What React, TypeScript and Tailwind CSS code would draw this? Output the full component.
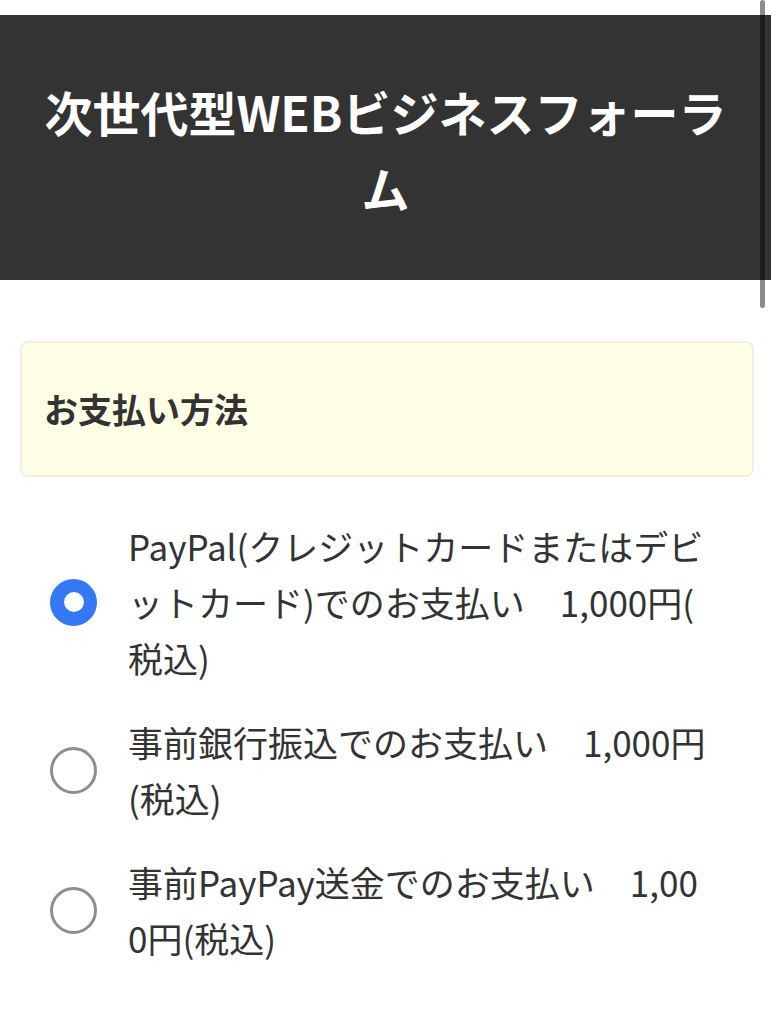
import React from "react";

const font = { fontFamily: '"Noto Sans CJK JP", "Noto Sans", sans-serif' };

function Radio({ checked }: { checked?: boolean }) {
  if (checked) {
    return (
      <div className="flex h-[47px] w-[47px] shrink-0 items-center justify-center rounded-full bg-[#3478f6]">
        <div className="h-[20px] w-[20px] rounded-full bg-white" />
      </div>
    );
  }
  return <div className="h-[47px] w-[47px] shrink-0 rounded-full border-[3px] border-[#8e8e8e] bg-white" />;
}

function Option({ lines, checked }: { lines: string[]; checked?: boolean }) {
  return (
    <label className="flex items-center gap-[31px] pl-[30px]">
      <Radio checked={checked} />
      <span className="whitespace-nowrap text-[35px] leading-[56px] text-[#333333]">
        {lines.map((l, i) => (
          <React.Fragment key={i}>
            {l}
            {i < lines.length - 1 && <br />}
          </React.Fragment>
        ))}
      </span>
    </label>
  );
}

export default function App() {
  return (
    <div className="relative min-h-[1024px] bg-white pt-[15px]" style={font}>
      <header className="bg-[#333333] px-[30px] pb-[55px] pt-[58px]">
        <h1 className="text-center text-[48px] font-bold leading-[76px] text-white">
          次世代型WEBビジネスフォーラム
        </h1>
      </header>

      <main className="pb-10 pl-[20px] pr-[17px] pt-[61px]">
        <div className="rounded-[8px] border-2 border-[#efefe4] bg-[#ffffe5] px-[22px] py-[40px]">
          <h2 className="text-[34px] font-bold leading-[52px] text-[#333333]">お支払い方法</h2>
        </div>

        <div className="mt-[41px] flex flex-col gap-[28px]">
          <Option
            checked
            lines={["PayPal(クレジットカードまたはデビ", "ットカード)でのお支払い　1,000円(", "税込)"]}
          />
          <Option lines={["事前銀行振込でのお支払い　1,000円", "(税込)"]} />
          <Option lines={["事前PayPay送金でのお支払い　1,00", "0円(税込)"]} />
        </div>
      </main>

      <div className="absolute right-[6px] top-0 h-[308px] w-[5px] rounded-full bg-black/45" />
    </div>
  );
}
